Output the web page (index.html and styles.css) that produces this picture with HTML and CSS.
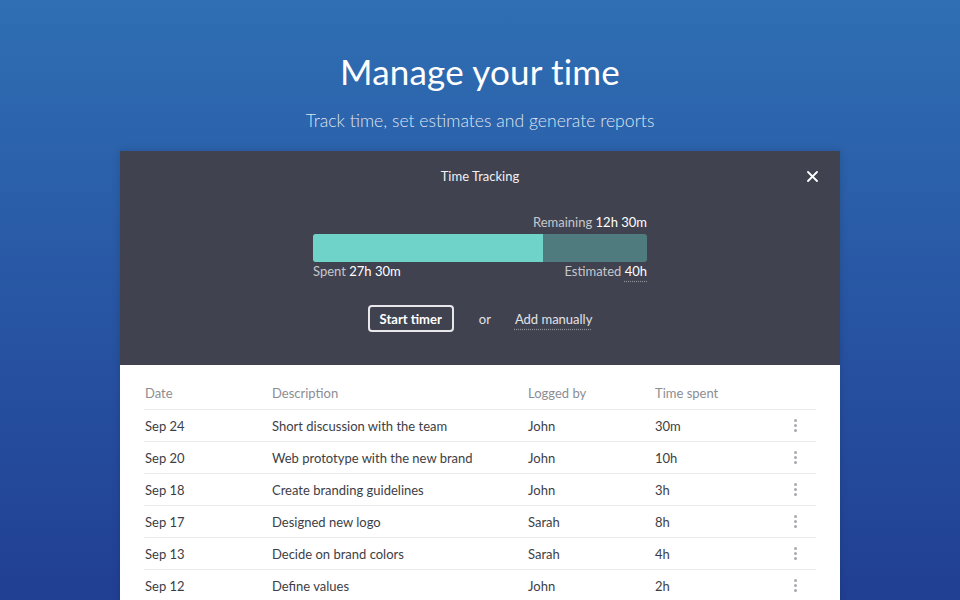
FILE: index.html
```html
<!DOCTYPE html>
<html>
<head>
<meta charset="utf-8">
<link rel="stylesheet" href="styles.css">
</head>
<body>
<div class="page">
  <header class="hero">
    <h1 class="hero-title">Manage your time</h1>
    <p class="hero-sub">Track time, set estimates and generate reports</p>
  </header>
  <section class="panel">
    <div class="panel-dark">
      <div class="panel-head">
        <span></span>
        <span class="panel-title">Time Tracking</span>
        <span class="close">
          <svg width="11" height="11" viewBox="0 0 11 11"><path d="M1 1 L10 10 M10 1 L1 10" stroke="#fff" stroke-width="1.8" stroke-linecap="round"/></svg>
        </span>
      </div>
      <div class="tracker">
        <div class="remaining">Remaining <b>12h 30m</b></div>
        <div class="bar"><div class="bar-fill" style="width:68.75%"></div></div>
        <div class="bar-labels">
          <span>Spent <b>27h 30m</b></span>
          <span>Estimated <b class="dotted">40h</b></span>
        </div>
      </div>
      <div class="actions">
        <button class="btn">Start timer</button>
        <span class="or">or</span>
        <span class="link">Add manually</span>
      </div>
    </div>
    <div class="panel-light">
      <div class="table">
        <div class="row head">
          <span>Date</span><span>Description</span><span>Logged by</span><span>Time spent</span><span></span>
        </div>
        <div class="row"><span>Sep 24</span><span>Short discussion with the team</span><span>John</span><span>30m</span><span class="dots"><i></i><i></i><i></i></span></div>
        <div class="row"><span>Sep 20</span><span>Web prototype with the new brand</span><span>John</span><span>10h</span><span class="dots"><i></i><i></i><i></i></span></div>
        <div class="row"><span>Sep 18</span><span>Create branding guidelines</span><span>John</span><span>3h</span><span class="dots"><i></i><i></i><i></i></span></div>
        <div class="row"><span>Sep 17</span><span>Designed new logo</span><span>Sarah</span><span>8h</span><span class="dots"><i></i><i></i><i></i></span></div>
        <div class="row"><span>Sep 13</span><span>Decide on brand colors</span><span>Sarah</span><span>4h</span><span class="dots"><i></i><i></i><i></i></span></div>
        <div class="row"><span>Sep 12</span><span>Define values</span><span>John</span><span>2h</span><span class="dots"><i></i><i></i><i></i></span></div>
      </div>
    </div>
  </section>
</div>
</body>
</html>
```
FILE: styles.css
```css
* { box-sizing: border-box; }
html, body { margin: 0; padding: 0; }
body {
  width: 960px;
  height: 600px;
  overflow: hidden;
  font-family: "Lato", "Open Sans", sans-serif;
  background: linear-gradient(180deg, #2f6fb3 0%, #2856a4 50%, #213f93 100%);
}
.page {
  display: flex;
  flex-direction: column;
  align-items: center;
}
.hero {
  text-align: center;
  color: #fff;
  padding-top: 50px;
}
.hero-title {
  margin: 0;
  font-size: 35px;
  font-weight: 400;
  line-height: 42px;
  letter-spacing: 0.2px;
}
.hero-sub {
  margin: 18px 0 0;
  font-size: 17.6px;
  line-height: 22px;
  color: rgba(255,255,255,0.85);
  font-weight: 300;
}
.panel {
  margin-top: 19px;
  width: 720px;
  box-shadow: 0 0 8px rgba(0,0,0,0.15);
}
.panel-dark {
  background: #40424f;
  height: 214px;
  color: #fff;
  display: flex;
  flex-direction: column;
}
.panel-head {
  display: grid;
  grid-template-columns: 1fr auto 1fr;
  align-items: center;
  height: 50px;
  padding: 0 22px;
}
.panel-title {
  font-size: 13px;
  color: #f1f1f4;
}
.close {
  justify-self: end;
  display: flex;
}
.tracker {
  width: 334px;
  align-self: center;
  margin-top: 13px;
  font-size: 13px;
  color: #c6c7cd;
}
.tracker b { font-weight: 400; color: #fff; }
.remaining {
  text-align: right;
  line-height: 16px;
}
.bar {
  margin-top: 4px;
  height: 28px;
  border-radius: 3px;
  background: #4f7b7f;
  overflow: hidden;
}
.bar-fill {
  height: 100%;
  background: #6fd3c9;
}
.bar-labels {
  display: flex;
  justify-content: space-between;
  margin-top: 1px;
  line-height: 16px;
}
.dotted {
  text-decoration: underline dotted #8d8e96;
  text-underline-offset: 5px;
}
.actions {
  display: flex;
  align-items: center;
  justify-content: center;
  margin-top: 26px;
  font-size: 13px;
  color: #e3e3e7;
}
.btn {
  font-family: inherit;
  font-size: 13px;
  font-weight: 700;
  color: #fff;
  background: transparent;
  border: 2px solid #e8e8ec;
  border-radius: 4px;
  height: 27px;
  padding: 0 10px;
}
.or { margin: 0 24px 0 25px; }
.link {
  text-decoration: underline dotted #8d8e96;
  text-underline-offset: 5px;
}
.panel-light {
  background: #fff;
  padding: 12px 24px 0;
  height: 260px;
}
.row {
  display: grid;
  grid-template-columns: 127px 256px 127px 1fr 42px;
  align-items: center;
  height: 32px;
  border-top: 1px solid #ececef;
  font-size: 13px;
  color: #3d3e45;
  padding-left: 1px;
}
.row.head {
  border-top: none;
  height: 32px;
  color: #8c8d93;
}
.dots {
  display: flex;
  flex-direction: column;
  align-items: center;
  gap: 2px;
}
.dots i {
  width: 3px;
  height: 3px;
  border-radius: 50%;
  background: #a9aab0;
}
```
